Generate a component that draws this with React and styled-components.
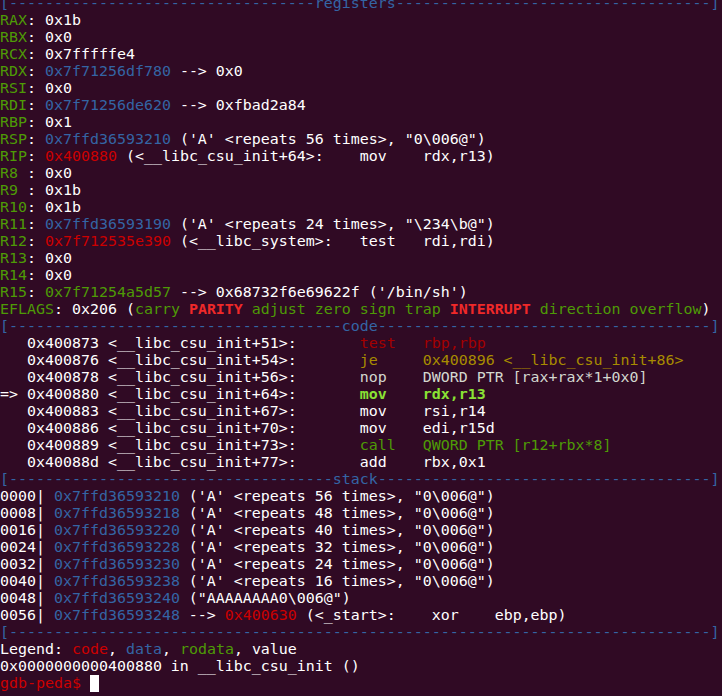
import React from 'react';
import styled, { createGlobalStyle } from 'styled-components';

const palette = {
  w: '#ffffff',
  g: '#4e9a06',
  b: '#3465a4',
  r: '#cc0000',
  R: '#ef2929',
  G: '#8ae234',
  d: '#a40000',
  y: '#a88c00',
  s: '#d3d7cf',
};

const Global = createGlobalStyle`
  html, body { margin: 0; padding: 0; background: #300a24; }
  body { overflow: hidden; }
`;

const Screen = styled.div`
  width: 722px;
  height: 696px;
  overflow: hidden;
  background: #300a24;
  font-family: "DejaVu Sans Mono", "Liberation Mono", monospace;
  font-size: 14.95px;
  color: #ffffff;
`;

const Buffer = styled.div`
  display: flex;
  flex-direction: column;
  margin-top: -5px;
`;

const Line = styled.div`
  height: 17px;
  line-height: 17px;
  white-space: pre;
`;

const Seg = styled.span`
  color: ${(p) => palette[p.$t] || '#ffffff'};
  font-weight: ${(p) => (p.$t === 'R' || p.$t === 'G' ? 'bold' : 'normal')};
`;

const Divider = styled(Line)`
  color: #3465a4;
`;

const Cursor = styled.span`
  display: inline-block;
  width: 9px;
  height: 17px;
  background: #ffffff;
  vertical-align: top;
`;

const dash = (n) => '-'.repeat(n);
const header = (title, left, right) => `[${dash(left)}${title}${dash(right)}]`;

const reg = (name, ...rest) => [['g', name], ['w', ': '], ...rest];

const regLines = [
  reg('RAX', ['w', '0x1b']),
  reg('RBX', ['w', '0x0']),
  reg('RCX', ['w', '0x7fffffe4']),
  reg('RDX', ['b', '0x7f71256df780'], ['w', ' --> 0x0']),
  reg('RSI', ['w', '0x0']),
  reg('RDI', ['b', '0x7f71256de620'], ['w', ' --> 0xfbad2a84']),
  reg('RBP', ['w', '0x1']),
  reg('RSP', ['b', '0x7ffd36593210'], ['w', ` ('A' <repeats 56 times>, "0\\006@")`]),
  reg('RIP', ['r', '0x400880'], ['w', ' (<__libc_csu_init+64>:    mov    rdx,r13)']),
  reg('R8 ', ['w', '0x0']),
  reg('R9 ', ['w', '0x1b']),
  reg('R10', ['w', '0x1b']),
  reg('R11', ['b', '0x7ffd36593190'], ['w', ` ('A' <repeats 24 times>, "\\234\\b@")`]),
  reg('R12', ['r', '0x7f712535e390'], ['w', ' (<__libc_system>:   test   rdi,rdi)']),
  reg('R13', ['w', '0x0']),
  reg('R14', ['w', '0x0']),
  reg('R15', ['g', '0x7f71254a5d57'], ['w', " --> 0x68732f6e69622f ('/bin/sh')"]),
  [
    ['g', 'EFLAGS'], ['w', ': 0x206 ('], ['g', 'carry '], ['R', 'PARITY'],
    ['g', ' adjust zero sign trap '], ['R', 'INTERRUPT'], ['g', ' direction overflow'], ['w', ')'],
  ],
];

const code = (prefix, addr, off, tone, op, args) => [
  ['w', `${prefix}${addr} <__libc_csu_init+${off}>:       `],
  [tone, op.padEnd(7, ' ') + args],
];

const codeLines = [
  code('   ', '0x400873', '51', 'd', 'test', 'rbp,rbp'),
  code('   ', '0x400876', '54', 'y', 'je', '0x400896 <__libc_csu_init+86>'),
  code('   ', '0x400878', '56', 's', 'nop', 'DWORD PTR [rax+rax*1+0x0]'),
  code('=> ', '0x400880', '64', 'G', 'mov', 'rdx,r13'),
  code('   ', '0x400883', '67', 'w', 'mov', 'rsi,r14'),
  code('   ', '0x400886', '70', 'w', 'mov', 'edi,r15d'),
  code('   ', '0x400889', '73', 'g', 'call', 'QWORD PTR [r12+rbx*8]'),
  code('   ', '0x40088d', '77', 'w', 'add', 'rbx,0x1'),
];

const rep = (off, addr, n) => [
  ['w', `${off}| `], ['b', addr], ['w', ` ('A' <repeats ${n} times>, "0\\006@")`],
];

const stackLines = [
  rep('0000', '0x7ffd36593210', 56),
  rep('0008', '0x7ffd36593218', 48),
  rep('0016', '0x7ffd36593220', 40),
  rep('0024', '0x7ffd36593228', 32),
  rep('0032', '0x7ffd36593230', 24),
  rep('0040', '0x7ffd36593238', 16),
  [['w', '0048| '], ['b', '0x7ffd36593240'], ['w', ' ("AAAAAAAA0\\006@")']],
  [['w', '0056| '], ['b', '0x7ffd36593248'], ['w', ' --> '], ['r', '0x400630'], ['w', ' (<_start>:    xor    ebp,ebp)']],
];

const TextLine = ({ segs }) => (
  <Line>
    {segs.map(([t, s], i) => (
      <Seg key={i} $t={t}>{s}</Seg>
    ))}
  </Line>
);

export default function App() {
  return (
    <Screen>
      <Global />
      <Buffer>
        <Divider>{header('registers', 34, 35)}</Divider>
        {regLines.map((l, i) => <TextLine key={`r${i}`} segs={l} />)}
        <Divider>{header('code', 37, 37)}</Divider>
        {codeLines.map((l, i) => <TextLine key={`c${i}`} segs={l} />)}
        <Divider>{header('stack', 36, 37)}</Divider>
        {stackLines.map((l, i) => <TextLine key={`s${i}`} segs={l} />)}
        <Divider>{header('', 78, 0)}</Divider>
        <TextLine segs={[['w', 'Legend: '], ['r', 'code'], ['w', ', '], ['b', 'data'], ['w', ', '], ['g', 'rodata'], ['w', ', value']]} />
        <TextLine segs={[['w', '0x0000000000400880 in __libc_csu_init ()']]} />
        <Line>
          <Seg $t="r">gdb-peda$</Seg>
          <Seg $t="w"> </Seg>
          <Cursor />
        </Line>
      </Buffer>
    </Screen>
  );
}
